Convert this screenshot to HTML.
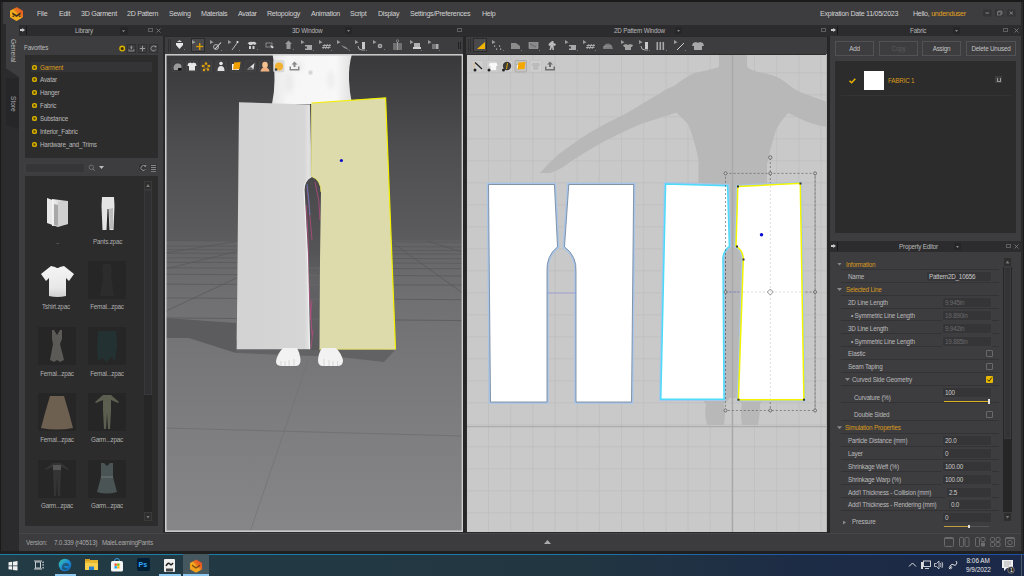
<!DOCTYPE html>
<html><head><meta charset="utf-8">
<style>
*{margin:0;padding:0;box-sizing:border-box}
html,body{width:1024px;height:576px;overflow:hidden;background:#1c1c1c;font-family:"Liberation Sans",sans-serif;color:#c4c4c4}
.a{position:absolute}
.t{position:absolute;white-space:nowrap;line-height:1}
.menu .t{font-size:7.1px;letter-spacing:-0.28px;color:#d2d2d2}
.s{font-size:6.3px;letter-spacing:-0.2px;margin-top:0.9px}
.org{color:#d99a1c}
.ibox{position:absolute;background:#2e2e30;border:1px solid #444}
</style></head><body>

<!-- outer frame -->
<div class="a" style="left:0;top:0;width:1024px;height:576px;background:#1a1a1a"></div>
<div class="a" style="left:1px;top:2px;width:1022px;height:551px;background:#2a2a2a"></div>

<!-- menu bar -->
<div class="a menu" style="left:3px;top:2px;width:1018px;height:23px;background:#3d3d40">
</div>
<div class="menu">
<span class="t" style="left:37px;top:11px">File</span>
<span class="t" style="left:59px;top:11px">Edit</span>
<span class="t" style="left:81px;top:11px">3D Garment</span>
<span class="t" style="left:127px;top:11px">2D Pattern</span>
<span class="t" style="left:169px;top:11px">Sewing</span>
<span class="t" style="left:201px;top:11px">Materials</span>
<span class="t" style="left:238px;top:11px">Avatar</span>
<span class="t" style="left:267px;top:11px">Retopology</span>
<span class="t" style="left:311px;top:11px">Animation</span>
<span class="t" style="left:350px;top:11px">Script</span>
<span class="t" style="left:378px;top:11px">Display</span>
<span class="t" style="left:410px;top:11px">Settings/Preferences</span>
<span class="t" style="left:482px;top:11px">Help</span>
<span class="t" style="left:820px;top:11px">Expiration Date 11/05/2023</span>
<span class="t" style="left:913px;top:11px">Hello, <span style="color:#e0a020">undenduser</span></span>
</div>
<!-- logo -->
<svg class="a" style="left:9px;top:6px" width="16" height="16" viewBox="0 0 16 16">
<defs><linearGradient id="lg1" x1="0.2" y1="0.8" x2="0.85" y2="0.15"><stop offset="0" stop-color="#f2a81c"/><stop offset="0.45" stop-color="#f2b01c"/><stop offset="0.6" stop-color="#ea7a20"/><stop offset="1" stop-color="#e45a22"/></linearGradient></defs>
<path d="M7.5,1.2 Q7.5,1 8,1.3 L13.6,4.4 Q14,4.6 14,5 L14,11 Q14,11.4 13.6,11.6 L8,14.8 Q7.5,15 7,14.8 L1.4,11.6 Q1,11.4 1,11 L1,5 Q1,4.6 1.4,4.4 Z" fill="url(#lg1)"/>
<path d="M3.3,6.3 L7.5,9 L11.7,6.3 L11.7,8.3 L7.5,11 L3.3,8.3 Z" fill="#3c2c1c"/>
<ellipse cx="4.3" cy="10.3" rx="1" ry="0.8" fill="#4a3418"/><ellipse cx="10.7" cy="10.3" rx="1" ry="0.8" fill="#4a3418"/>
</svg>
<!-- window controls -->
<svg class="a" style="left:980px;top:6px" width="40" height="14" viewBox="980 6 40 14">
<g fill="#343436"><rect x="983" y="9.5" width="8.5" height="7" rx="0.5"/><rect x="995" y="9.5" width="8.5" height="7" rx="0.5"/><rect x="1007" y="9.5" width="8.5" height="7" rx="0.5"/></g>
<line x1="985.5" y1="13" x2="989" y2="13" stroke="#a0a0a0" stroke-width="0.8"/>
<g fill="none" stroke="#9a9a9a" stroke-width="0.6"><rect x="997.5" y="12" width="3.5" height="3"/><path d="M998.5,12 L998.5,11 L1002,11 L1002,14 L1001,14"/></g>
<g stroke="#9a9a9a" stroke-width="0.7"><line x1="1009.5" y1="11.5" x2="1013" y2="14.5"/><line x1="1013" y1="11.5" x2="1009.5" y2="14.5"/></g>
</svg>
<!-- header band -->
<div class="a" style="left:19px;top:25px;width:1002px;height:11px;background:#2c2c2e"></div>


<!-- left tab strip -->
<div class="a" style="left:3px;top:24px;width:16px;height:529px;background:#2b2b2d"></div>
<div class="a" style="left:5.5px;top:24px;width:13.5px;height:53px;background:#3d3d40;clip-path:polygon(0 0,100% 0,100% 100%,0 83%)"></div>
<div class="a" style="left:5.5px;top:78px;width:13.5px;height:51px;background:#262628;clip-path:polygon(0 0,100% 0,100% 100%,0 92%)"></div>
<span class="t" style="left:16px;top:39px;font-size:6.6px;transform:rotate(90deg);transform-origin:0 0;color:#b8b8b8">General</span>
<span class="t" style="left:16px;top:96px;font-size:6.6px;transform:rotate(90deg);transform-origin:0 0;color:#a8a8b0">Store</span>

<!-- library panel -->
<div class="a" style="left:19px;top:36px;width:144px;height:497px;background:#3d3d40"></div>
<span class="t s" style="left:75px;top:27.5px;color:#b8b8b8">Library</span>
<div class="a" style="left:20px;top:28px;width:5px;height:4px;background:#c8c8c8;clip-path:polygon(0 25%,45% 25%,45% 0,100% 50%,45% 100%,45% 75%,0 75%)"></div>
<div class="a" style="left:26px;top:26px;width:1px;height:9px;background:#1a1a1a"></div>
<div class="a" style="left:119.5px;top:27px;width:8px;height:8px;background:#262628;border-radius:1px"></div>
<div class="a" style="left:122px;top:30.3px;width:3px;height:2px;background:#888;clip-path:polygon(0 0,100% 0,50% 100%)"></div>
<div class="a" style="left:148px;top:28px;width:5px;height:4px;border:1px solid #5e5e5e"></div>
<svg class="a" style="left:156px;top:28px" width="5" height="5"><g stroke="#8a8a8a" stroke-width="0.7"><line x1="0.5" y1="0.5" x2="4.5" y2="4.5"/><line x1="4.5" y1="0.5" x2="0.5" y2="4.5"/></g></svg>

<span class="t s" style="left:24px;top:44px;color:#bcbcbc">Favorites</span>
<svg class="a" style="left:115px;top:40px" width="45" height="16" viewBox="115 40 45 16">
<circle cx="122.2" cy="48.6" r="2.3" fill="#3a3000" stroke="#dcb400" stroke-width="1.4"/>
<g fill="#3d3d40" stroke="#2e2e30" stroke-width="0.8"><rect x="127.3" y="44.4" width="8.2" height="8.2"/><rect x="138.4" y="44.4" width="8.2" height="8.2"/><rect x="149.5" y="44.4" width="8.2" height="8.2"/></g>
<path d="M131.4,45.5 L133,47.5 L132,47.5 L132,49.5 L130.8,49.5 L130.8,47.5 L129.8,47.5 Z" fill="#8a8a8a"/><path d="M128.5,49 L128.5,51.5 L134.3,51.5 L134.3,49 L133.5,49 L133.5,50.5 L129.3,50.5 L129.3,49 Z" fill="#8a8a8a"/>
<rect x="142" y="45.8" width="1" height="5.5" fill="#9a9a9a"/><rect x="139.8" y="48" width="5.4" height="1" fill="#9a9a9a"/>
<path d="M155.5,47 A2.5,2.5 0 1 0 155.8,49.5" fill="none" stroke="#9a9a9a" stroke-width="0.9"/><polygon points="154.5,45.5 156.8,46 155.5,47.8" fill="#9a9a9a"/>
</svg>
<div class="a" style="left:25px;top:55px;width:133px;height:103px;background:#2c2c2c"></div>
<div class="a" style="left:31px;top:62px;width:121px;height:10px;background:#343436"></div>
<div class="a" style="left:32px;top:64.5px;width:5px;height:5px;border-radius:50%;background:#dcb400;box-shadow:inset 0 0 0 1.3px #dcb400,inset 0 0 0 3px #5a4a00"></div>
<span class="t s" style="left:40px;top:63.7px;color:#d99a1c">Garment</span>
<div class="a" style="left:32px;top:77.3px;width:5px;height:5px;border-radius:50%;background:#dcb400;box-shadow:inset 0 0 0 1.3px #dcb400,inset 0 0 0 3px #5a4a00"></div>
<span class="t s" style="left:40px;top:76.5px;color:#bababa">Avatar</span>
<div class="a" style="left:32px;top:90.2px;width:5px;height:5px;border-radius:50%;background:#dcb400;box-shadow:inset 0 0 0 1.3px #dcb400,inset 0 0 0 3px #5a4a00"></div>
<span class="t s" style="left:40px;top:89.4px;color:#bababa">Hanger</span>
<div class="a" style="left:32px;top:103.0px;width:5px;height:5px;border-radius:50%;background:#dcb400;box-shadow:inset 0 0 0 1.3px #dcb400,inset 0 0 0 3px #5a4a00"></div>
<span class="t s" style="left:40px;top:102.2px;color:#bababa">Fabric</span>
<div class="a" style="left:32px;top:115.8px;width:5px;height:5px;border-radius:50%;background:#dcb400;box-shadow:inset 0 0 0 1.3px #dcb400,inset 0 0 0 3px #5a4a00"></div>
<span class="t s" style="left:40px;top:115.0px;color:#bababa">Substance</span>
<div class="a" style="left:32px;top:128.7px;width:5px;height:5px;border-radius:50%;background:#dcb400;box-shadow:inset 0 0 0 1.3px #dcb400,inset 0 0 0 3px #5a4a00"></div>
<span class="t s" style="left:40px;top:127.9px;color:#bababa">Interior_Fabric</span>
<div class="a" style="left:32px;top:141.5px;width:5px;height:5px;border-radius:50%;background:#dcb400;box-shadow:inset 0 0 0 1.3px #dcb400,inset 0 0 0 3px #5a4a00"></div>
<span class="t s" style="left:40px;top:140.7px;color:#bababa">Hardware_and_Trims</span>

<!-- search row -->
<div class="a" style="left:25px;top:163px;width:60px;height:10px;background:#353537;border:1px solid #3f3f41"></div>
<svg class="a" style="left:88px;top:164px" width="8" height="8"><circle cx="3.3" cy="3.3" r="2.2" fill="none" stroke="#7a7a7a" stroke-width="0.8"/><line x1="4.9" y1="4.9" x2="7" y2="7" stroke="#7a7a7a" stroke-width="0.9"/></svg>
<div class="a" style="left:99px;top:166px;width:5px;height:3px;background:#bbb;clip-path:polygon(0 0,100% 0,50% 100%)"></div>
<div class="a" style="left:138px;top:163px;width:9px;height:9px;background:#343436;border:1px solid #3e3e40"></div>
<div class="a" style="left:149px;top:163px;width:9px;height:9px;background:#343436;border:1px solid #3e3e40"></div>

<svg class="a" style="left:138px;top:163px" width="21" height="10" viewBox="138 163 21 10">
<path d="M145.2,166.5 A2.4,2.4 0 1 0 145.5,169" fill="none" stroke="#9a9a9a" stroke-width="0.9"/><polygon points="144,165 146.5,165.3 145.3,167.3" fill="#9a9a9a"/>
<g fill="#888"><rect x="151" y="165" width="5" height="1"/><rect x="151" y="167" width="5" height="1"/><rect x="151" y="169" width="5" height="1"/><rect x="151" y="171" width="5" height="0.8"/></g>
</svg>
<div class="a" style="left:25px;top:176px;width:133px;height:350px;background:#2c2c2c"></div>
<!-- scrollbar -->
<div class="a" style="left:144px;top:181px;width:8px;height:340px;background:#262626"></div>
<div class="a" style="left:144px;top:181px;width:8px;height:9px;background:#2e2e2e;border:1px solid #3a3a3a"></div>
<div class="a" style="left:144px;top:190px;width:8px;height:205px;background:#303032;border:1px solid #38383a"></div>
<div class="a" style="left:144px;top:512px;width:8px;height:9px;background:#2e2e2e;border:1px solid #3a3a3a"></div>


<!-- thumbnails -->
<svg class="a" style="left:44px;top:196px" width="28" height="34" viewBox="0 0 28 34">
<defs><linearGradient id="fg" x1="0" x2="1"><stop offset="0" stop-color="#f4f4f4"/><stop offset="1" stop-color="#b8b8b8"/></linearGradient></defs>
<polygon points="3,2 14,6 14,31 3,27" fill="#e8e8e8"/>
<polygon points="8,3 24,5 24,28 8,30" fill="url(#fg)"/>
<polygon points="14,6 24,5 24,28 14,31" fill="#d0d0d0"/>
<polygon points="10,8 14,9 14,30 10,29" fill="#a8a8a8"/>
</svg>
<svg class="a" style="left:100px;top:196px" width="16" height="36" viewBox="0 0 16 36">
<path d="M2,1 L14,1 L14.5,10 L13.5,34 L9.5,34 L8.5,13 L7.5,13 L6.5,34 L2.5,34 L1.5,10 Z" fill="#e4e4e4"/>
<path d="M9,13 L13,12 L13,33 L10,33 Z" fill="#bcbcbc"/>
</svg>
<span class="t s" style="left:56px;top:238px;color:#9a9a9a">..</span>
<span class="t s" style="left:93px;top:238px;color:#acacac">Pants.zpac</span>
<svg class="a" style="left:40px;top:265px" width="35" height="32" viewBox="0 0 35 32">
<defs><linearGradient id="tsg" x1="0" y1="0" x2="0" y2="1"><stop offset="0" stop-color="#f4f4f4"/><stop offset="0.7" stop-color="#e8e8e8"/><stop offset="1" stop-color="#cfcfcf"/></linearGradient></defs>
<path d="M11,1 L15,2 Q17.5,4 20,2 L24,1 L34,9 L29,16 L26,13 L26,31 Q17.5,33 9,31 L9,13 L6,16 L1,9 Z" fill="url(#tsg)"/>
</svg>
<span class="t s" style="left:42px;top:303px;color:#acacac">Tshirt.zpac</span>
<div class="a" style="left:88px;top:261px;width:38px;height:38px;background:#262626"></div>
<span class="t s" style="left:90px;top:303.2px;width:34px;text-align:center;color:#b0b0b0">Femal...zpac</span>
<div class="a" style="left:38px;top:327px;width:38px;height:38px;background:#262626"></div>
<span class="t s" style="left:40px;top:369.7px;width:34px;text-align:center;color:#b0b0b0">Femal...zpac</span>
<div class="a" style="left:88px;top:327px;width:38px;height:38px;background:#262626"></div>
<span class="t s" style="left:90px;top:369.7px;width:34px;text-align:center;color:#b0b0b0">Femal...zpac</span>
<div class="a" style="left:38px;top:393px;width:38px;height:38px;background:#262626"></div>
<span class="t s" style="left:40px;top:435.7px;width:34px;text-align:center;color:#b0b0b0">Femal...zpac</span>
<div class="a" style="left:88px;top:393px;width:38px;height:38px;background:#262626"></div>
<span class="t s" style="left:90px;top:435.7px;width:34px;text-align:center;color:#b0b0b0">Garm...zpac</span>
<div class="a" style="left:38px;top:459.5px;width:38px;height:38px;background:#262626"></div>
<span class="t s" style="left:40px;top:501.7px;width:34px;text-align:center;color:#b0b0b0">Garm...zpac</span>
<div class="a" style="left:88px;top:459.5px;width:38px;height:38px;background:#262626"></div>
<span class="t s" style="left:90px;top:501.7px;width:34px;text-align:center;color:#b0b0b0">Garm...zpac</span>

<svg class="a" style="left:88px;top:261px" width="38" height="38" viewBox="0 0 38 38"><path d="M15,3 L23,3 L24,10 L23,16 L26,35 L12,35 L15,16 L14,10 Z" fill="#2c2c2c"/></svg>
<svg class="a" style="left:38px;top:327px" width="38" height="38" viewBox="0 0 38 38"><path d="M14,3 L16,3 L19,8 L22,3 L24,3 L24,12 L22,17 L26,33 L22,35 L19,33 L16,35 L12,33 L15,17 L14,12 Z" fill="#5c5a56"/></svg>
<svg class="a" style="left:88px;top:327px" width="38" height="38" viewBox="0 0 38 38"><path d="M10,4 L28,4 L29,18 L27,34 L23,30 L19,35 L14,31 L10,34 L9,18 Z" fill="#243132"/></svg>
<svg class="a" style="left:38px;top:393px" width="38" height="38" viewBox="0 0 38 38"><path d="M12,3 L26,3 L31,20 L35,35 Q19,38 3,35 L7,20 Z" fill="#6e6050"/></svg>
<svg class="a" style="left:88px;top:393px" width="38" height="38" viewBox="0 0 38 38"><path d="M15,2 L23,2 L31,9 L30,10 L23,7 L23,18 L22,36 L20,36 L19,20 L18,36 L16,36 L15,18 L15,7 L8,10 L7,9 Z" fill="#5c5e50"/></svg>
<svg class="a" style="left:38px;top:459.5px" width="38" height="38" viewBox="0 0 38 38"><path d="M15,3 L23,3 L31,9 L30,10 L23,7 L23,12 L22,36 L20,36 L19,18 L18,36 L16,36 L15,12 L15,7 L8,10 L7,9 Z" fill="#343434"/><rect x="15" y="5" width="8" height="5" fill="#555"/></svg>
<svg class="a" style="left:88px;top:459.5px" width="38" height="38" viewBox="0 0 38 38"><path d="M13,3 L16,3 L19,6 L22,3 L25,3 L25,17 L29,32 Q19,35 9,32 L13,17 Z" fill="#4a5454"/><rect x="13" y="16" width="12" height="2" fill="#5c6666"/></svg>

<!-- status bar -->
<div class="a" style="left:19px;top:533px;width:1002px;height:1px;background:#464648"></div>
<div class="a" style="left:19px;top:534px;width:1002px;height:17px;background:#3c3c3e"></div>
<span class="t s" style="left:26px;top:539px;color:#a8a8a8">Version:</span>
<span class="t s" style="left:54px;top:539px;color:#a8a8a8">7.0.339 (r40513)</span>
<span class="t s" style="left:102px;top:539px;color:#a8a8a8">MaleLearningPants</span>
<div class="a" style="left:544px;top:540px;width:7px;height:4px;background:#aaa;clip-path:polygon(50% 0,100% 100%,0 100%)"></div>


<!-- 3D window -->
<span class="t s" style="left:292px;top:27.5px;color:#b8b8b8">3D Window</span>
<div class="a" style="left:345px;top:27px;width:7px;height:7px;background:#262628"></div>
<div class="a" style="left:347px;top:30px;width:3px;height:2px;background:#888;clip-path:polygon(0 0,100% 0,50% 100%)"></div>
<div class="a" style="left:457px;top:28px;width:5px;height:4px;border:1px solid #5e5e5e"></div>
<div class="a" style="left:165px;top:37px;width:298px;height:17px;background:#3d3d40"></div>
<div class="a" style="left:168px;top:39px;width:1px;height:13px;background:#2e2e30"></div>
<div class="a" style="left:170px;top:39px;width:1px;height:13px;background:#2e2e30"></div>
<div class="a" style="left:191px;top:38px;width:14px;height:14px;background:#4a4a4c;border:1px solid #2a2a2a"></div>
<svg class="a" style="left:165px;top:54px" width="298" height="478" viewBox="165 54 298 478">
<defs>
<linearGradient id="sky" x1="0" y1="0" x2="0" y2="1">
<stop offset="0" stop-color="#38383a"/><stop offset="0.5" stop-color="#4e4e50"/><stop offset="1" stop-color="#5c5c5e"/>
</linearGradient>
<linearGradient id="floor" x1="0" y1="0" x2="0" y2="1">
<stop offset="0" stop-color="#646466"/><stop offset="0.2" stop-color="#707072"/><stop offset="0.65" stop-color="#7e7e80"/><stop offset="1" stop-color="#868688"/>
</linearGradient>
<linearGradient id="lp" x1="0" y1="0" x2="1" y2="0">
<stop offset="0" stop-color="#d2d2d2"/><stop offset="0.9" stop-color="#d6d6d6"/><stop offset="0.96" stop-color="#e2e2e2"/><stop offset="1" stop-color="#cccccc"/>
</linearGradient>
<linearGradient id="tor" x1="0" y1="0" x2="1" y2="0">
<stop offset="0" stop-color="#e6e6e6"/><stop offset="0.2" stop-color="#f6f6f6"/><stop offset="0.8" stop-color="#f8f8f8"/><stop offset="1" stop-color="#e0e0e0"/>
</linearGradient>
</defs>
<rect x="165" y="54" width="298" height="187" fill="url(#sky)"/>
<rect x="165" y="240.5" width="298" height="292" fill="url(#floor)"/>
<g stroke="#58585a" stroke-width="0.7" fill="none">
<line x1="165" y1="240.5" x2="463" y2="242.3"/>
<line x1="165" y1="246" x2="463" y2="246.9"/>
<line x1="165" y1="249.6" x2="463" y2="250.5"/>
<line x1="165" y1="253.2" x2="463" y2="254.1"/>
<line x1="165" y1="257.8" x2="463" y2="258.7"/>
<line x1="165" y1="262.3" x2="463" y2="263.3"/>
<line x1="165" y1="267.8" x2="463" y2="268.7"/>
<line x1="165" y1="274.2" x2="463" y2="276"/>
<line x1="165" y1="284.2" x2="463" y2="285.1"/>
<line x1="165" y1="297.9" x2="463" y2="299.7"/>
<line x1="165" y1="317.9" x2="463" y2="320.6"/>
<line x1="165" y1="428" x2="463" y2="436" stroke="#6c6c6e"/>
<line x1="165" y1="253" x2="237" y2="241.4"/>
<line x1="165" y1="269" x2="237" y2="251.4"/>
<line x1="165" y1="311.5" x2="237" y2="277.8"/>
<line x1="391.8" y1="242.3" x2="463" y2="293.3"/>
<line x1="427.3" y1="241" x2="463" y2="252.3"/>
<line x1="309" y1="358" x2="250" y2="532" stroke="#727274"/>
</g>
<polygon points="165,318 236,323 236,353 189,338 165,338" fill="#5c5c5e"/>
<polygon points="236,340 395,350 384,362 340,357 236,353" fill="#626264"/>
<path d="M272.5,54 L352,54 Q348.5,66 349,80 Q349.5,92 352,104 L272,104 Q274.5,92 274.5,80 Q274.5,64 272.5,54 Z" fill="url(#tor)"/>
<defs><filter id="bl" x="-50%" y="-50%" width="200%" height="200%"><feGaussianBlur stdDeviation="2.5"/></filter><filter id="bl1"><feGaussianBlur stdDeviation="0.8"/></filter></defs>
<g filter="url(#bl)" fill="#dcdcdc" opacity="0.45"><ellipse cx="289" cy="82" rx="4" ry="12"/><ellipse cx="298" cy="66" rx="5" ry="5"/><ellipse cx="331" cy="80" rx="3" ry="10"/></g>
<ellipse cx="310.5" cy="72.5" rx="1.5" ry="2" fill="#b8b8b8" filter="url(#bl1)"/>
<defs><linearGradient id="gapg" x1="0" y1="0" x2="0" y2="1"><stop offset="0" stop-color="#48484a"/><stop offset="0.45" stop-color="#555557"/><stop offset="0.6" stop-color="#626264"/><stop offset="1" stop-color="#5a5a5c"/></linearGradient></defs>
<rect x="302" y="175" width="20" height="175" fill="url(#gapg)"/>
<g stroke="#6c6c6e" stroke-width="0.6"><line x1="302" y1="268" x2="322" y2="268"/><line x1="302" y1="275" x2="322" y2="276"/><line x1="302" y1="285" x2="322" y2="285"/><line x1="302" y1="299" x2="322" y2="299"/><line x1="302" y1="319" x2="322" y2="319"/></g>
<path d="M307,186 Q310,215 312,240 M306,205 Q309,240 308,270 L312,335 M315,182 Q320,200 320,220" stroke="#c84888" stroke-width="0.7" fill="none"/>
<path d="M307,184 Q309,200 310,215" stroke="#5a88d0" stroke-width="0.7" fill="none"/>
<path d="M312,300 L310,320 M313,330 L311,348" stroke="#c84888" stroke-width="0.6" fill="none"/>
<path d="M239,102.3 L310,104.5 L311.7,176.5 Q304,180 304,190 L307.4,255 L309.6,349.2 L236.7,349.2 Z" fill="url(#lp)"/>
<path d="M311.7,176.5 Q304,180 304,190 L307.4,255 L309.6,349.2" stroke="#f0f0f0" stroke-width="1.2" fill="none"/>
<path d="M311.6,103 L385.6,97.8 L395.5,349.2 L319.5,349.2 L320,260 L321,192 Q321,180 311.7,176.5 Z" fill="#dddbab"/>
<polyline points="311.6,103 385.6,97.8 395.5,349.2" stroke="#f2f000" stroke-width="1.2" fill="none"/>
<line x1="319.3" y1="349.2" x2="395.5" y2="349.2" stroke="#e8e860" stroke-width="0.8"/>
<line x1="311.6" y1="103" x2="311.7" y2="176" stroke="#f2f080" stroke-width="0.8"/><path d="M311.7,176.5 Q321,180 321,192" stroke="#f2f060" stroke-width="0.8" fill="none"/>
<circle cx="341.4" cy="160.5" r="1.6" fill="#0a0ac8"/>
<g fill="#f2f2f2">
<path d="M283,348 L297,348 Q300,353 300.5,359 Q301,365.5 296,366 L281,366 Q276,365.5 276,361.5 Q277,354 283,348 Z"/>
<path d="M322,348 L336,348 Q341,353 343,360 Q343.5,365.5 338,366 L323,366 Q318,366 318,360 Q318.5,353 322,348 Z"/>
</g>
<g stroke="#c4c4c4" stroke-width="0.6">
<line x1="281" y1="361" x2="281" y2="366"/><line x1="285" y1="361" x2="285" y2="366"/><line x1="289" y1="360" x2="289" y2="366"/><line x1="294" y1="359" x2="294" y2="366"/>
<line x1="324" y1="359" x2="324" y2="366"/><line x1="329" y1="360" x2="329" y2="366"/><line x1="333" y1="361" x2="333" y2="366"/><line x1="337.5" y1="361" x2="337.5" y2="366"/>
</g>
<rect x="165.8" y="54.8" width="296.6" height="476.4" fill="none" stroke="#cfcfcf" stroke-width="1.5"/>
</svg>
<div class="a" style="left:463px;top:36px;width:3px;height:497px;background:#262626"></div>


<!-- 2D window -->
<span class="t s" style="left:614px;top:27.5px;color:#b8b8b8">2D Pattern Window</span>
<div class="a" style="left:675px;top:27px;width:7px;height:7px;background:#262628"></div>
<div class="a" style="left:677px;top:30px;width:3px;height:2px;background:#888;clip-path:polygon(0 0,100% 0,50% 100%)"></div>
<div class="a" style="left:821px;top:28px;width:5px;height:4px;border:1px solid #5e5e5e"></div>
<div class="a" style="left:466px;top:37px;width:361px;height:17px;background:#3d3d40"></div>
<div class="a" style="left:468px;top:39px;width:1px;height:13px;background:#2e2e30"></div>
<div class="a" style="left:470px;top:39px;width:1px;height:13px;background:#2e2e30"></div>
<div class="a" style="left:473px;top:38px;width:14px;height:14px;background:#4a4a4c;border:1px solid #2a2a2a"></div>
<svg class="a" style="left:476px;top:41px" width="10" height="9"><polygon points="1,8 9,1 9,8" fill="#f0b400"/></svg>
<svg class="a" style="left:466px;top:54px" width="361" height="478" viewBox="466 54 361 478">
<rect x="466" y="54" width="361" height="478" fill="#c9c9c9"/>
<g stroke="#bfbfbf" stroke-width="0.8">
<line x1="488.5" y1="54" x2="488.5" y2="532"/>
<line x1="510.7" y1="54" x2="510.7" y2="532"/>
<line x1="532.8" y1="54" x2="532.8" y2="532"/>
<line x1="555.0" y1="54" x2="555.0" y2="532"/>
<line x1="577.2" y1="54" x2="577.2" y2="532"/>
<line x1="599.3" y1="54" x2="599.3" y2="532"/>
<line x1="621.5" y1="54" x2="621.5" y2="532"/>
<line x1="643.7" y1="54" x2="643.7" y2="532"/>
<line x1="665.9" y1="54" x2="665.9" y2="532"/>
<line x1="688.0" y1="54" x2="688.0" y2="532"/>
<line x1="710.2" y1="54" x2="710.2" y2="532"/>
<line x1="732.4" y1="54" x2="732.4" y2="532"/>
<line x1="754.5" y1="54" x2="754.5" y2="532"/>
<line x1="776.7" y1="54" x2="776.7" y2="532"/>
<line x1="798.9" y1="54" x2="798.9" y2="532"/>
<line x1="821.0" y1="54" x2="821.0" y2="532"/>
<line x1="466" y1="72.8" x2="827" y2="72.8"/>
<line x1="466" y1="94.8" x2="827" y2="94.8"/>
<line x1="466" y1="116.8" x2="827" y2="116.8"/>
<line x1="466" y1="138.8" x2="827" y2="138.8"/>
<line x1="466" y1="160.8" x2="827" y2="160.8"/>
<line x1="466" y1="182.8" x2="827" y2="182.8"/>
<line x1="466" y1="204.8" x2="827" y2="204.8"/>
<line x1="466" y1="226.8" x2="827" y2="226.8"/>
<line x1="466" y1="248.8" x2="827" y2="248.8"/>
<line x1="466" y1="270.8" x2="827" y2="270.8"/>
<line x1="466" y1="292.8" x2="827" y2="292.8"/>
<line x1="466" y1="314.8" x2="827" y2="314.8"/>
<line x1="466" y1="336.8" x2="827" y2="336.8"/>
<line x1="466" y1="358.8" x2="827" y2="358.8"/>
<line x1="466" y1="380.8" x2="827" y2="380.8"/>
<line x1="466" y1="402.8" x2="827" y2="402.8"/>
<line x1="466" y1="424.8" x2="827" y2="424.8"/>
<line x1="466" y1="446.8" x2="827" y2="446.8"/>
<line x1="466" y1="468.8" x2="827" y2="468.8"/>
<line x1="466" y1="490.8" x2="827" y2="490.8"/>
<line x1="466" y1="512.8" x2="827" y2="512.8"/>
</g>
<!-- avatar silhouette -->
<path fill="#b8b8b8" d="M719,54 L747,54 L747,67 Q752,71 764,73 Q778,76 785,82 Q792,88 800,92 L827,102 L827,127 Q815,125 805,121 L788,113 Q780,122 776,130 Q770,148 767,165 L767,330 L762,398 Q762,402 760,404 Q760,412 758,425 L742,425 Q740,412 742,404 L736,398 L730,398 L724,404 Q726,412 724,425 L707,425 Q704,412 706,404 Q703,402 703,398 L699,330 L698.5,180 L698.5,159.5 Q694,138 688,124 L676.5,112.6 Q660,118 641,124 Q620,133 603,142 Q585,152 570,162 Q560,170 550,173 L540,173 Q548,163 559,154 Q575,142 589,133 Q608,122 627,113 Q645,102 662,92 Q668,88 674,86 Q684,78 694,73 Q710,70 719,67 Z"/>
<line x1="732.5" y1="54" x2="732.5" y2="532" stroke="#a8a8a8" stroke-width="1.4"/>
<line x1="466" y1="426.7" x2="827" y2="426.7" stroke="#a4a4a4" stroke-width="1"/>
<!-- bounding box -->
<g fill="none" stroke="#555" stroke-width="0.6" stroke-dasharray="2,2">
<rect x="725.5" y="173.4" width="89.6" height="237.1"/>
<line x1="770.3" y1="158" x2="770.3" y2="410.5"/>
<line x1="725.5" y1="292" x2="815.1" y2="292"/>
</g>
<g fill="#cfcfcf" stroke="#555" stroke-width="0.6">
<circle cx="770.3" cy="157.5" r="1.6"/>
<circle cx="725.5" cy="173.4" r="1.4"/><circle cx="770.3" cy="173.4" r="1.4"/><circle cx="815.1" cy="173.4" r="1.4"/>
<circle cx="725.5" cy="292" r="1.4"/><circle cx="815.1" cy="292" r="1.4"/>
<circle cx="725.5" cy="410.5" r="1.4"/><circle cx="770.3" cy="410.5" r="1.4"/><circle cx="815.1" cy="410.5" r="1.4"/>
</g>
<!-- pattern pieces -->
<g fill="none" stroke="#a8c6ea" stroke-width="3.6" stroke-linejoin="miter">
<path d="M488.5,184.5 L554.4,184.5 L557.5,246.8 Q546,256 547,272 L547,402 L490.5,402 Z"/><path d="M568.8,184.5 L633.7,184.5 L631.5,402 L576,402 L576,272 Q577,256 564.5,246.8 Z"/><path d="M665.6,183.9 L727.6,185.7 L729.4,246.4 Q722,252 723,262 L724,399.2 L660.8,399.2 Z"/><path d="M737.8,186.5 L800.3,183.3 L803.9,399.7 L738.4,399.7 L743.3,259.4 Q743,250 736,246.4 Z"/>
</g>
<g fill="#ffffff">
<path d="M488.5,184.5 L554.4,184.5 L557.5,246.8 Q546,256 547,272 L547,402 L490.5,402 Z"/><path d="M568.8,184.5 L633.7,184.5 L631.5,402 L576,402 L576,272 Q577,256 564.5,246.8 Z"/><path d="M665.6,183.9 L727.6,185.7 L729.4,246.4 Q722,252 723,262 L724,399.2 L660.8,399.2 Z"/><path d="M737.8,186.5 L800.3,183.3 L803.9,399.7 L738.4,399.7 L743.3,259.4 Q743,250 736,246.4 Z"/>
</g>
<g fill="none" stroke="#6e7e90" stroke-width="0.8">
<path d="M488.5,184.5 L554.4,184.5 L557.5,246.8 Q546,256 547,272 L547,402 L490.5,402 Z"/><path d="M568.8,184.5 L633.7,184.5 L631.5,402 L576,402 L576,272 Q577,256 564.5,246.8 Z"/>
</g>
<line x1="547" y1="293" x2="576" y2="293" stroke="#8a8ae0" stroke-width="0.6"/><line x1="727" y1="292" x2="741" y2="292" stroke="#9a9ae0" stroke-width="0.6"/>
<path d="M665.6,183.9 L727.6,185.7 L729.4,246.4 Q722,252 723,262 L724,399.2 L660.8,399.2 Z" fill="none" stroke="#4cdcf8" stroke-width="1.5"/>
<path d="M737.8,186.5 L800.3,183.3 L803.9,399.7 L738.4,399.7 L743.3,259.4 Q743,250 736,246.4 Z" fill="none" stroke="#f4f400" stroke-width="1.5"/>
<g fill="#333">
<rect x="737" y="185.5" width="2" height="2"/><rect x="799.5" y="182.5" width="2" height="2"/><rect x="803" y="398.7" width="2" height="2"/><rect x="737.5" y="398.7" width="2" height="2"/>
<rect x="736" y="245.5" width="2" height="2"/><rect x="742.5" y="258.5" width="2" height="2"/>
</g>
<g fill="none" stroke-width="0.6" stroke-dasharray="2,2">
<line x1="770.3" y1="186" x2="770.3" y2="399" stroke="#c8c8c8"/>
<line x1="739" y1="292" x2="803" y2="292" stroke="#c8c8c8"/>
<line x1="725.5" y1="185" x2="725.5" y2="400" stroke="#555"/>
<line x1="815.1" y1="173.4" x2="815.1" y2="410.5" stroke="#555"/>
</g>
<g fill="#cfcfcf" stroke="#555" stroke-width="0.6">
<circle cx="770.3" cy="157.5" r="1.6"/>
<circle cx="725.5" cy="173.4" r="1.4"/><circle cx="770.3" cy="173.4" r="1.4"/><circle cx="815.1" cy="173.4" r="1.4"/>
<circle cx="725.5" cy="292" r="1.4"/><circle cx="815.1" cy="292" r="1.4"/>
<circle cx="725.5" cy="410.5" r="1.4"/><circle cx="770.3" cy="410.5" r="1.4"/><circle cx="815.1" cy="410.5" r="1.4"/>
</g>
<path d="M767.3,292 L770.3,289 L773.3,292 L770.3,295 Z" fill="none" stroke="#555" stroke-width="0.6"/>
<circle cx="761.5" cy="234.7" r="1.7" fill="#0a0ad0"/>
<line x1="466.5" y1="54" x2="466.5" y2="532" stroke="#2e2e2e" stroke-width="1"/><line x1="466" y1="54.5" x2="827" y2="54.5" stroke="#2e2e2e" stroke-width="1"/><line x1="826.5" y1="54" x2="826.5" y2="532" stroke="#b4b4b4" stroke-width="1"/>
</svg>
<div class="a" style="left:827px;top:36px;width:3px;height:497px;background:#262626"></div>


<svg class="a" style="left:0;top:0" width="1024" height="60" viewBox="0 0 1024 60"><polygon points="176,43 183,43 183,45 179.5,49 176,45" fill="#e8e8e8"/><polygon points="177,42 182,42 179.5,40" fill="#cfcfcf"/><rect x="184" y="49" width="1" height="1" fill="#777"/><polygon points="192,40 195.5,42.2 192,44" fill="#9a9a9a"/><rect x="199" y="43" width="1.4" height="7" fill="#d89a00"/><rect x="196.2" y="45.8" width="7" height="1.4" fill="#d89a00"/><polygon points="210,40 213.5,42.2 210,44" fill="#9a9a9a"/><circle cx="216" cy="47" r="2.5" fill="none" stroke="#bbb" stroke-width="0.9"/><line x1="215" y1="49" x2="221" y2="42.5" stroke="#d8d8d8" stroke-width="1.1"/><rect x="221" y="50" width="1" height="1" fill="#777"/><polygon points="228,40 231.5,42.2 228,44" fill="#9a9a9a"/><line x1="232" y1="50" x2="237.5" y2="42.5" stroke="#c8c8c8" stroke-width="0.9"/><circle cx="237.5" cy="42" r="1.1" fill="#e8e8e8"/><rect x="239" y="50" width="1" height="1" fill="#777"/><path d="M247.5,43.5 Q249,41 252,42 Q255,41 256.5,43.5 L255,45 L252.5,44 L252.5,45 L249,45 L249,44 Z" fill="#d0d0d0"/><rect x="249" y="46" width="2" height="3" fill="#d0d0d0"/><rect x="252.5" y="46" width="2" height="3" fill="#d0d0d0"/><rect x="257" y="49" width="1" height="1" fill="#777"/><rect x="266" y="43" width="6" height="4" fill="none" stroke="#999" stroke-width="0.8"/><path d="M270,45 L274,47 L272,48.5 Z" fill="#e0e0e0"/><path d="M288.5,40.5 L292,44 L290.5,44 L290.5,49 L286.5,49 L286.5,44 L285,44 Z" fill="#9a9a9a"/><rect x="293" y="49" width="1" height="1" fill="#777"/><polygon points="301,40 304.5,42.2 301,44" fill="#9a9a9a"/><path d="M305,45 L312,45 L312,50 L305,50 L305,48.5 L307,48.5 L307,46.5 L305,46.5 Z" fill="#a8a8a8"/><rect x="313" y="50" width="1" height="1" fill="#777"/><polygon points="319,40 322.5,42.2 319,44" fill="#9a9a9a"/><g stroke="#b0b0b0" stroke-width="0.9"><line x1="323" y1="49" x2="325" y2="44"/><line x1="325.5" y1="49" x2="327.5" y2="44"/><line x1="328" y1="49" x2="330" y2="44"/><line x1="322.5" y1="45.5" x2="331" y2="45.5"/><line x1="322" y1="47.5" x2="330.5" y2="47.5"/></g><rect x="331" y="50" width="1" height="1" fill="#777"/><polygon points="337,40 340.5,42.2 337,44" fill="#9a9a9a"/><path d="M341,45 L346,47 L349,50 L344,48 Z" fill="#888"/><rect x="349" y="50" width="1" height="1" fill="#777"/><polygon points="355,40 358.5,42.2 355,44" fill="#9a9a9a"/><rect x="362" y="42" width="3" height="7" fill="#c8c8c8"/><path d="M358,46 Q358,50 362,50 L365,50" fill="none" stroke="#aaa" stroke-width="1"/><rect x="366" y="50" width="1" height="1" fill="#777"/><polygon points="373,40 376.5,42.2 373,44" fill="#9a9a9a"/><circle cx="380" cy="46" r="2.3" fill="#aaa"/><circle cx="380" cy="46" r="1" fill="#666"/><rect x="384" y="49" width="1" height="1" fill="#777"/><rect x="393" y="43" width="9" height="7" fill="#707070"/><circle cx="397.5" cy="41" r="1.2" fill="none" stroke="#999" stroke-width="0.7"/><line x1="397.5" y1="42" x2="397.5" y2="50" stroke="#aaa" stroke-width="0.8"/><polygon points="410,40 413.5,42.2 410,44" fill="#9a9a9a"/><rect x="414" y="43" width="6" height="4" fill="#b0b0b0"/><rect x="413" y="47" width="8" height="2" fill="#d0d0d0"/><rect x="421" y="50" width="1" height="1" fill="#777"/><polygon points="428,40 431.5,42.2 428,44" fill="#9a9a9a"/><rect x="432" y="44" width="3" height="5" fill="#777"/><rect x="435.5" y="44" width="3" height="5" fill="#aaa"/><rect x="439" y="50" width="1" height="1" fill="#777"/><rect x="458" y="42" width="1" height="7" fill="#222"/><rect x="460" y="42" width="1" height="7" fill="#222"/><polygon points="492,40 495.5,42.2 492,44" fill="#9a9a9a"/><g fill="#bbb"><rect x="494" y="45.5" width="1.2" height="1.2"/><rect x="499" y="45.5" width="1.2" height="1.2"/><rect x="496" y="48.5" width="1.2" height="1.2"/><rect x="500" y="48.5" width="1.2" height="1.2"/></g><rect x="503" y="50" width="1" height="1" fill="#777"/><path d="M511,43 L516,43 L520,46 L520,49 L511,49 Z" fill="#8c8c8c"/><rect x="521" y="50" width="1" height="1" fill="#777"/><rect x="529" y="42.5" width="9" height="6" fill="#888" stroke="#aaa" stroke-width="0.6"/><path d="M530,44 L536,47" stroke="#555" stroke-width="0.6"/><rect x="539" y="50" width="1" height="1" fill="#777"/><path d="M552,41 L553.5,41 L553.5,43 L556,44 L555,46 L553.5,45.5 L554,50 L552.5,50 L552,47 L551,50 L549.5,50 L550.5,45.5 L549,46 L548.5,44 Z" fill="#bbb"/><polygon points="565,40 568.5,42.2 565,44" fill="#9a9a9a"/><path d="M569,45 L576,45 L576,50 L569,50 L569,48.5 L571,48.5 L571,46.5 L569,46.5 Z" fill="#a8a8a8"/><rect x="577" y="50" width="1" height="1" fill="#777"/><polygon points="583,40 586.5,42.2 583,44" fill="#9a9a9a"/><g stroke="#b0b0b0" stroke-width="0.9"><line x1="587" y1="49" x2="589" y2="44"/><line x1="589.5" y1="49" x2="591.5" y2="44"/><line x1="592" y1="49" x2="594" y2="44"/><line x1="586.5" y1="45.5" x2="595" y2="45.5"/><line x1="586" y1="47.5" x2="594.5" y2="47.5"/></g><rect x="595" y="50" width="1" height="1" fill="#777"/><path d="M603,49 Q603,44 608,43.5 Q612,44 613,49 Z" fill="#7a7a7a"/><line x1="603" y1="47" x2="612" y2="46" stroke="#999" stroke-width="0.6"/><polygon points="621,40 624.5,42.2 621,44" fill="#9a9a9a"/><path d="M623,45 L626,44 L628,45 L630,44 L633,45 L632,47 L631,47 L631,50 L625,50 L625,47 L624,47 Z" fill="#a0a0a0"/><polygon points="639,40 642.5,42.2 639,44" fill="#9a9a9a"/><rect x="645" y="42" width="3" height="7" fill="#c8c8c8"/><path d="M641,46 Q641,50 645,50 L648,50" fill="none" stroke="#aaa" stroke-width="1"/><rect x="649" y="50" width="1" height="1" fill="#777"/><g fill="#a8a8a8"><rect x="656.5" y="42" width="1.6" height="8"/><rect x="659.5" y="42" width="1.6" height="8"/><rect x="662.5" y="42" width="1.6" height="8"/></g><rect x="666" y="50" width="1" height="1" fill="#777"/><polygon points="674,40 677.5,42.2 674,44" fill="#9a9a9a"/><line x1="677" y1="50" x2="684" y2="43" stroke="#d0d0d0" stroke-width="1"/><rect x="685" y="50" width="1" height="1" fill="#777"/><path d="M693,43 L696,42 Q698,43.5 700,42 L703,43 L704,46 L702,46 L702,50 L694,50 L694,46 L692,46 Z" fill="#a8a8a8"/></svg>
<svg class="a" style="left:0;top:0" width="1024" height="80" viewBox="0 0 1024 80"><rect x="172" y="60.8" width="10.5" height="11" rx="1" fill="#3c3c3e" stroke="#4c4c4e" stroke-width="0.6"/><rect x="186.5" y="60.8" width="10.5" height="11" rx="1" fill="#3c3c3e" stroke="#4c4c4e" stroke-width="0.6"/><rect x="201" y="60.8" width="10.5" height="11" rx="1" fill="#3c3c3e" stroke="#4c4c4e" stroke-width="0.6"/><rect x="216" y="60.8" width="10.5" height="11" rx="1" fill="#3c3c3e" stroke="#4c4c4e" stroke-width="0.6"/><rect x="230.5" y="60.8" width="10.5" height="11" rx="1" fill="#3c3c3e" stroke="#4c4c4e" stroke-width="0.6"/><rect x="245" y="60.8" width="10.5" height="11" rx="1" fill="#3c3c3e" stroke="#4c4c4e" stroke-width="0.6"/><rect x="259.5" y="60.8" width="10.5" height="11" rx="1" fill="#3c3c3e" stroke="#4c4c4e" stroke-width="0.6"/><rect x="273.5" y="60.8" width="10.5" height="11" rx="1" fill="#dcdcdc" stroke="#c8c8c8" stroke-width="0.5"/>
<path d="M173.5,68 Q174,63 178,63.5 Q181,63 181.5,66 L181,70 L174,70 Z" fill="#9a9a9a"/><rect x="178" y="68" width="3.5" height="2.5" fill="#111"/>
<path d="M188,63.5 L190.5,62.5 Q192,64 193.5,62.5 L196,63.5 L196.5,66 L195,66 L195,70.5 L189,70.5 L189,66 L187.5,66 Z" fill="#e8e8e8"/>
<g fill="#e0a010"><circle cx="206" cy="63.5" r="1.3"/><circle cx="209" cy="66" r="1.3"/><circle cx="208" cy="69.5" r="1.3"/><circle cx="204" cy="70" r="1.3"/><circle cx="203" cy="66" r="1.3"/></g><circle cx="206" cy="66.5" r="2" fill="none" stroke="#c89010" stroke-width="0.7"/>
<circle cx="221" cy="63.5" r="1.8" fill="#e8e8e8"/><path d="M217.5,71 Q217.5,66 221,66 Q224.5,66 224.5,71 Z" fill="#e0e0e0"/>
<rect x="232" y="64" width="7" height="6" fill="#f0f0f0"/><path d="M234,62.5 L240.5,62 L239.5,69 L233,69.5 Z" fill="#f0a000"/>
<path d="M247,69.5 L254.5,63 L253.5,69.5 Z" fill="#e0e0e0"/><path d="M247,69.5 L251,67 L253.5,69.5 Z" fill="#555"/>
<ellipse cx="265" cy="65" rx="2.8" ry="3.2" fill="#f4c090"/><path d="M260.5,71.5 Q261,67.5 265,67.5 Q269,67.5 269.5,71.5 Z" fill="#f0b080"/>
<circle cx="279" cy="66.5" r="4" fill="#f0b030"/><circle cx="276" cy="69.5" r="1.3" fill="#444"/>
<path d="M294.5,61.5 L297.5,64.5 L295.5,64.5 L295.5,67 L293.5,67 L293.5,64.5 L291.5,64.5 Z" fill="#888"/><path d="M289.5,66.5 L289.5,70.5 L299.5,70.5 L299.5,66.5 L298,66.5 L298,69 L291,69 L291,66.5 Z" fill="#888"/>
<rect x="472" y="60.5" width="11.5" height="11.5" rx="1" fill="#cfcfcf" stroke="#c0c0c0" stroke-width="0.6"/><rect x="486.5" y="60.5" width="11.5" height="11.5" rx="1" fill="#cfcfcf" stroke="#c0c0c0" stroke-width="0.6"/><rect x="501" y="60.5" width="11.5" height="11.5" rx="1" fill="#cfcfcf" stroke="#c0c0c0" stroke-width="0.6"/><rect x="515" y="60.5" width="11.5" height="11.5" rx="1" fill="#c4c4c4" stroke="#9a9a9a" stroke-width="0.6"/><rect x="530" y="60.5" width="11.5" height="11.5" rx="1" fill="#cfcfcf" stroke="#c0c0c0" stroke-width="0.6"/>
<line x1="475" y1="62.5" x2="482" y2="69" stroke="#222" stroke-width="1.3"/><line x1="474" y1="63" x2="474" y2="68" stroke="#e0b070" stroke-width="0.8"/><circle cx="475" cy="70" r="1.5" fill="#222"/>
<path d="M489.5,63.5 L492,62.5 Q493,64 494.5,62.5 L497,63.5 L497.5,66 L496,66 L496,70 L490.5,70 L490.5,66 L489,66 Z" fill="#f8f8f8"/><circle cx="489" cy="70" r="1.5" fill="#222"/>
<circle cx="507" cy="66" r="4.2" fill="#3a3a3a"/><line x1="507.5" y1="63" x2="506.5" y2="69" stroke="#e0a000" stroke-width="1"/><circle cx="503.5" cy="70" r="1.5" fill="#222"/>
<rect x="516.5" y="64.5" width="5" height="5" fill="#f4f4f4" stroke="#999" stroke-width="0.4"/><path d="M518.5,62.5 L525.5,62 L524.5,69 L517.5,69.5 Z" fill="#f4a800"/>
<path d="M532,63.5 L534.5,62.5 Q535.5,64 537,62.5 L539.5,63.5 L540,66 L538.5,66 L538.5,70 L533,70 L533,66 L531.5,66 Z" fill="#bcbcbc"/>
<path d="M550,61.5 L553,64.5 L551,64.5 L551,67 L549,67 L549,64.5 L547,64.5 Z" fill="#707070"/><path d="M545,66.5 L545,70.5 L555,70.5 L555,66.5 L553.5,66.5 L553.5,69 L546.5,69 L546.5,66.5 Z" fill="#707070"/>
</svg>
<!-- Fabric panel -->
<div class="a" style="left:830px;top:36px;width:191px;height:205px;background:#3d3d40"></div>
<div class="a" style="left:831px;top:28px;width:5px;height:4px;background:#c8c8c8;clip-path:polygon(0 25%,45% 25%,45% 0,100% 50%,45% 100%,45% 75%,0 75%)"></div>
<div class="a" style="left:837px;top:26px;width:1px;height:9px;background:#1a1a1a"></div>
<span class="t s" style="left:910px;top:27.5px;color:#b8b8b8">Fabric</span>
<div class="a" style="left:953px;top:27px;width:7px;height:7px;background:#262628"></div>
<div class="a" style="left:955px;top:30px;width:3px;height:2px;background:#888;clip-path:polygon(0 0,100% 0,50% 100%)"></div>
<div class="a" style="left:1003px;top:28px;width:5px;height:4px;border:1px solid #5e5e5e"></div>
<svg class="a" style="left:1014px;top:28px" width="5" height="5"><g stroke="#8a8a8a" stroke-width="0.7"><line x1="0.5" y1="0.5" x2="4.5" y2="4.5"/><line x1="4.5" y1="0.5" x2="0.5" y2="4.5"/></g></svg>
<div class="a" style="left:835px;top:41px;width:39px;height:15px;background:#3d3d40;border:1px solid #525254"></div>
<span class="t s" style="left:835px;top:45.5px;width:39px;text-align:center;color:#c4c4c4">Add</span>
<div class="a" style="left:879px;top:41px;width:39px;height:15px;background:#3d3d40;border:1px solid #525254"></div>
<span class="t s" style="left:879px;top:45.5px;width:39px;text-align:center;color:#5a5a5a">Copy</span>
<div class="a" style="left:922px;top:41px;width:39px;height:15px;background:#3d3d40;border:1px solid #525254"></div>
<span class="t s" style="left:922px;top:45.5px;width:39px;text-align:center;color:#c4c4c4">Assign</span>
<div class="a" style="left:966px;top:41px;width:50px;height:15px;background:#3d3d40;border:1px solid #525254"></div>
<span class="t s" style="left:966px;top:45.5px;width:50px;text-align:center;color:#c4c4c4">Delete Unused</span>

<div class="a" style="left:835px;top:61px;width:181px;height:172px;background:#2c2c2c"></div>
<svg class="a" style="left:848px;top:77px" width="9" height="8"><polyline points="1.5,3.8 3.6,5.8 7.3,1.8" stroke="#e8b400" stroke-width="1.5" fill="none"/></svg>
<div class="a" style="left:864px;top:71px;width:20px;height:19px;background:#ffffff"></div>
<span class="t s" style="left:888px;top:77.5px;color:#d99a1c">FABRIC 1</span>
<div class="a" style="left:995px;top:76px;width:7px;height:7px;background:#3d3d40"></div>
<div class="a" style="left:996.5px;top:77.5px;width:4px;height:4px;border:1px solid #999;border-top:none"></div>
<div class="a" style="left:841px;top:95px;width:170px;height:1px;background:#343436"></div>

<!-- Property Editor -->
<div class="a" style="left:830px;top:241px;width:191px;height:11px;background:#2c2c2e"></div>
<div class="a" style="left:830px;top:252px;width:191px;height:281px;background:#3d3d40"></div>
<div class="a" style="left:831px;top:244px;width:5px;height:4px;background:#c8c8c8;clip-path:polygon(0 25%,45% 25%,45% 0,100% 50%,45% 100%,45% 75%,0 75%)"></div>
<div class="a" style="left:837px;top:242px;width:1px;height:9px;background:#1a1a1a"></div>
<span class="t s" style="left:899px;top:243.5px;color:#b8b8b8">Property Editor</span>
<div class="a" style="left:954px;top:243px;width:7px;height:7px;background:#262628"></div>
<div class="a" style="left:956px;top:246px;width:3px;height:2px;background:#888;clip-path:polygon(0 0,100% 0,50% 100%)"></div>
<div class="a" style="left:1006px;top:244px;width:5px;height:4px;border:1px solid #5e5e5e"></div>
<svg class="a" style="left:1014px;top:244px" width="5" height="5"><g stroke="#8a8a8a" stroke-width="0.7"><line x1="0.5" y1="0.5" x2="4.5" y2="4.5"/><line x1="4.5" y1="0.5" x2="0.5" y2="4.5"/></g></svg>
<!-- scrollbar -->
<div class="a" style="left:1003px;top:257px;width:9px;height:265px;background:#262626"></div>
<div class="a" style="left:1003px;top:257px;width:9px;height:10px;background:#2e2e2e;border:1px solid #3c3c3c"></div>
<div class="a" style="left:1004px;top:267px;width:7px;height:172px;background:#333335;border:1px solid #3a3a3a"></div>
<div class="a" style="left:1003px;top:512px;width:9px;height:10px;background:#2e2e2e;border:1px solid #3c3c3c"></div>
<div class="a" style="left:837px;top:262.5px;width:5px;height:3px;background:#888;clip-path:polygon(0 0,100% 0,50% 100%)"></div>
<span class="t s" style="left:846px;top:260.7px;color:#d99a1c">Information</span>
<div class="a" style="left:841px;top:269.0px;width:158px;height:1px;background:#333335"></div>
<span class="t s" style="left:848px;top:273.4px;color:#bababa">Name</span>
<div class="a" style="left:841px;top:281.7px;width:158px;height:1px;background:#333335"></div>
<div class="a" style="left:926px;top:271.2px;width:66px;height:11px;background:#353537;border:1px solid #3e3e40"></div>
<span class="t s" style="left:929px;top:273.4px;color:#c8c8c8">Pattern2D_10656</span>
<div class="a" style="left:837px;top:288.1px;width:5px;height:3px;background:#888;clip-path:polygon(0 0,100% 0,50% 100%)"></div>
<span class="t s" style="left:846px;top:286.3px;color:#d99a1c">Selected Line</span>
<div class="a" style="left:841px;top:294.6px;width:158px;height:1px;background:#333335"></div>
<span class="t s" style="left:848px;top:299.2px;color:#bababa">2D Line Length</span>
<div class="a" style="left:841px;top:307.5px;width:158px;height:1px;background:#333335"></div>
<div class="a" style="left:942px;top:297.0px;width:50px;height:11px;background:#353537;border:1px solid #3e3e40"></div>
<span class="t s" style="left:945px;top:299.2px;color:#6a6a6a">9.945in</span>
<span class="t s" style="left:851px;top:312.09999999999997px;color:#bababa">• Symmetric Line Length</span>
<div class="a" style="left:841px;top:320.4px;width:158px;height:1px;background:#333335"></div>
<div class="a" style="left:942px;top:309.9px;width:50px;height:11px;background:#353537;border:1px solid #3e3e40"></div>
<span class="t s" style="left:945px;top:312.09999999999997px;color:#6a6a6a">19.890in</span>
<span class="t s" style="left:848px;top:325.0px;color:#bababa">3D Line Length</span>
<div class="a" style="left:841px;top:333.3px;width:158px;height:1px;background:#333335"></div>
<div class="a" style="left:942px;top:322.8px;width:50px;height:11px;background:#353537;border:1px solid #3e3e40"></div>
<span class="t s" style="left:945px;top:325.0px;color:#6a6a6a">9.942in</span>
<span class="t s" style="left:851px;top:337.9px;color:#bababa">• Symmetric Line Length</span>
<div class="a" style="left:841px;top:346.2px;width:158px;height:1px;background:#333335"></div>
<div class="a" style="left:942px;top:335.7px;width:50px;height:11px;background:#353537;border:1px solid #3e3e40"></div>
<span class="t s" style="left:945px;top:337.9px;color:#6a6a6a">19.885in</span>
<span class="t s" style="left:848px;top:350.59999999999997px;color:#bababa">Elastic</span>
<div class="a" style="left:841px;top:358.9px;width:158px;height:1px;background:#333335"></div>
<div class="a" style="left:986px;top:350.4px;width:7px;height:7px;border:1px solid #6a6a6a;border-radius:1px"></div>
<span class="t s" style="left:848px;top:363.5px;color:#bababa">Seam Taping</span>
<div class="a" style="left:841px;top:371.8px;width:158px;height:1px;background:#333335"></div>
<div class="a" style="left:986px;top:363.3px;width:7px;height:7px;border:1px solid #6a6a6a;border-radius:1px"></div>
<span class="t s" style="left:852px;top:376.3px;color:#bababa">Curved Side Geometry</span>
<div class="a" style="left:841px;top:384.6px;width:158px;height:1px;background:#333335"></div>
<div class="a" style="left:845px;top:378.1px;width:5px;height:3px;background:#888;clip-path:polygon(0 0,100% 0,50% 100%)"></div>
<div class="a" style="left:986px;top:376.1px;width:7px;height:7px;background:#e8b800;border-radius:1px"></div>
<svg class="a" style="left:986px;top:376.1px" width="7" height="7"><polyline points="1.3,3.5 3,5.3 5.8,1.5" stroke="#3a3000" stroke-width="1" fill="none"/></svg>
<span class="t s" style="left:854px;top:393.7px;color:#bababa">Curvature (%)</span>
<div class="a" style="left:841px;top:402.0px;width:158px;height:1px;background:#333335"></div>
<div class="a" style="left:942px;top:387px;width:50px;height:11px;background:#353537;border:1px solid #3e3e40"></div>
<span class="t s" style="left:945px;top:389px;color:#c8c8c8">100</span>
<div class="a" style="left:944px;top:400.5px;width:45px;height:1.5px;background:#d8b020"></div>
<div class="a" style="left:988px;top:398.5px;width:2px;height:5px;background:#e0e0e0"></div>
<span class="t s" style="left:854px;top:411.4px;color:#bababa">Double Sided</span>
<div class="a" style="left:841px;top:419.7px;width:158px;height:1px;background:#333335"></div>
<div class="a" style="left:986px;top:411.2px;width:7px;height:7px;border:1px solid #6a6a6a;border-radius:1px"></div>
<div class="a" style="left:837px;top:426.3px;width:5px;height:3px;background:#888;clip-path:polygon(0 0,100% 0,50% 100%)"></div>
<span class="t s" style="left:845px;top:424.5px;color:#d99a1c">Simulation Properties</span>
<div class="a" style="left:841px;top:432.8px;width:158px;height:1px;background:#333335"></div>
<span class="t s" style="left:848px;top:437.3px;color:#bababa">Particle Distance (mm)</span>
<div class="a" style="left:841px;top:445.6px;width:158px;height:1px;background:#333335"></div>
<div class="a" style="left:942px;top:435.1px;width:50px;height:11px;background:#353537;border:1px solid #3e3e40"></div>
<span class="t s" style="left:945px;top:437.3px;color:#c8c8c8">20.0</span>
<span class="t s" style="left:848px;top:450.2px;color:#bababa">Layer</span>
<div class="a" style="left:841px;top:458.5px;width:158px;height:1px;background:#333335"></div>
<div class="a" style="left:942px;top:448.0px;width:50px;height:11px;background:#353537;border:1px solid #3e3e40"></div>
<span class="t s" style="left:945px;top:450.2px;color:#c8c8c8">0</span>
<span class="t s" style="left:848px;top:463.0px;color:#bababa">Shrinkage Weft (%)</span>
<div class="a" style="left:841px;top:471.3px;width:158px;height:1px;background:#333335"></div>
<div class="a" style="left:942px;top:460.8px;width:50px;height:11px;background:#353537;border:1px solid #3e3e40"></div>
<span class="t s" style="left:945px;top:463.0px;color:#c8c8c8">100.00</span>
<span class="t s" style="left:848px;top:475.8px;color:#bababa">Shrinkage Warp (%)</span>
<div class="a" style="left:841px;top:484.1px;width:158px;height:1px;background:#333335"></div>
<div class="a" style="left:942px;top:473.6px;width:50px;height:11px;background:#353537;border:1px solid #3e3e40"></div>
<span class="t s" style="left:945px;top:475.8px;color:#c8c8c8">100.00</span>
<span class="t s" style="left:848px;top:488.7px;color:#bababa">Add'l Thickness - Collision (mm)</span>
<div class="a" style="left:841px;top:497.0px;width:158px;height:1px;background:#333335"></div>
<div class="a" style="left:946px;top:486.5px;width:46px;height:11px;background:#353537;border:1px solid #3e3e40"></div>
<span class="t s" style="left:949px;top:488.7px;color:#c8c8c8">2.5</span>
<span class="t s" style="left:848px;top:501.5px;color:#bababa">Add'l Thickness - Rendering (mm)</span>
<div class="a" style="left:841px;top:509.8px;width:158px;height:1px;background:#333335"></div>
<div class="a" style="left:948px;top:499.3px;width:44px;height:11px;background:#353537;border:1px solid #3e3e40"></div>
<span class="t s" style="left:951px;top:501.5px;color:#c8c8c8">0.0</span>

<div class="a" style="left:843px;top:520.5px;width:3px;height:4px;background:#888;clip-path:polygon(0 0,100% 50%,0 100%)"></div>
<span class="t s" style="left:852px;top:518.5px;color:#bababa">Pressure</span>
<div class="a" style="left:942px;top:512px;width:50px;height:11px;background:#353537;border:1px solid #3e3e40"></div>
<span class="t s" style="left:945px;top:514.5px;color:#c8c8c8">0</span>
<div class="a" style="left:944px;top:525.5px;width:45px;height:1px;background:#555"></div>
<div class="a" style="left:944px;top:525.5px;width:25px;height:1px;background:#c0a040"></div>
<div class="a" style="left:968px;top:524.5px;width:2px;height:3px;background:#ddd"></div>
<!-- layout icons bottom right -->
<svg class="a" style="left:940px;top:534px" width="84" height="16" viewBox="940 534 84 16">
<g fill="none" stroke="#6e6e6e" stroke-width="0.9">
<rect x="944.5" y="537.5" width="9" height="9" rx="1"/><line x1="944.5" y1="538.5" x2="953.5" y2="538.5"/>
<rect x="959.5" y="537.5" width="4" height="9" rx="1"/><rect x="965" y="537.5" width="4" height="9" rx="1"/>
<rect x="975.5" y="537.5" width="4" height="9" rx="1"/><rect x="981" y="537.5" width="4" height="4" rx="1"/>
<rect x="990.5" y="537.5" width="4" height="4" rx="1"/><rect x="996" y="537.5" width="4" height="4" rx="1"/><rect x="990.5" y="542.5" width="4" height="4" rx="1"/><rect x="996" y="542.5" width="4" height="4" rx="1"/>
<rect x="1005.5" y="537.5" width="9" height="9" rx="1"/><line x1="1005.5" y1="538.5" x2="1014.5" y2="538.5"/><circle cx="1010" cy="542.5" r="2.2"/>
</g>
<rect x="981" y="542.5" width="4" height="4" rx="1" fill="#6e6e6e"/>
</svg>
<div class="a" style="left:146px;top:184px;width:4px;height:3px;background:#777;clip-path:polygon(50% 0,100% 100%,0 100%)"></div>
<div class="a" style="left:146px;top:515.5px;width:4px;height:3px;background:#777;clip-path:polygon(0 0,100% 0,50% 100%)"></div>
<div class="a" style="left:1005.5px;top:260.5px;width:4px;height:3px;background:#777;clip-path:polygon(50% 0,100% 100%,0 100%)"></div>
<div class="a" style="left:1005.5px;top:515.5px;width:4px;height:3px;background:#777;clip-path:polygon(0 0,100% 0,50% 100%)"></div>
<!-- taskbar -->
<div class="a" style="left:0;top:551px;width:1024px;height:2.5px;background:#202020"></div>
<div class="a" style="left:0;top:553.5px;width:1024px;height:1.5px;background:linear-gradient(90deg,#1a82aa 0%,#1a78a8 55%,#1f58a8 80%,#1f50a8 100%)"></div>
<div class="a" style="left:0;top:555px;width:1024px;height:21px;background:linear-gradient(90deg,#223b44 0%,#223641 55%,#1d2c45 78%,#1b2848 100%)"></div>
<!-- windows logo -->
<svg class="a" style="left:8px;top:560.5px" width="10" height="10" viewBox="0 0 10 10"><g fill="#f0f0f0"><polygon points="0.5,1.3 4.2,0.8 4.2,4.4 0.5,4.4"/><polygon points="5,0.7 9.5,0 9.5,4.4 5,4.4"/><polygon points="0.5,5.2 4.2,5.2 4.2,8.8 0.5,8.3"/><polygon points="5,5.2 9.5,5.2 9.5,9.6 5,8.9"/></g></svg>
<!-- task view -->
<svg class="a" style="left:34px;top:560px" width="10" height="10" viewBox="0 0 10 10"><g fill="none" stroke="#ddd" stroke-width="0.9"><rect x="1.5" y="2" width="5" height="6"/><line x1="0" y1="1" x2="8" y2="1"/><line x1="0" y1="9" x2="8" y2="9"/></g><g fill="#ddd"><rect x="8.5" y="1.5" width="1.2" height="1.5"/><rect x="8.5" y="4.2" width="1.2" height="1.5"/><rect x="8.5" y="7" width="1.2" height="1.5"/></g></svg>
<!-- edge -->
<svg class="a" style="left:58px;top:558px" width="14" height="14" viewBox="0 0 14 14">
<defs><linearGradient id="eg" x1="0" y1="0" x2="1" y2="1"><stop offset="0" stop-color="#38c8a0"/><stop offset="0.5" stop-color="#1f8fd8"/><stop offset="1" stop-color="#0c5aa8"/></linearGradient></defs>
<circle cx="7" cy="7" r="6.3" fill="url(#eg)"/><path d="M4,9 Q4,5 8,5 Q11,5 11,8 L6,8 Q6.5,10.5 10,10.5 Q8,12.5 5.5,12 Q3,11 4,9 Z" fill="#1f3540" opacity="0.55"/></svg>
<div class="a" style="left:55px;top:574px;width:21px;height:2px;background:#8cc8f0"></div>
<!-- explorer -->
<svg class="a" style="left:85px;top:559px" width="13" height="12" viewBox="0 0 13 12"><rect x="0" y="1" width="13" height="10" fill="#e8b830"/><rect x="0" y="0" width="5" height="2" fill="#d8a020"/><rect x="0" y="4" width="13" height="7" fill="#f8d050"/><rect x="4" y="7.5" width="5" height="3.5" fill="#2a80d0"/></svg>
<!-- store -->
<svg class="a" style="left:110px;top:558px" width="14" height="14" viewBox="0 0 14 14"><path d="M4.5,3 Q4.5,0.5 7,0.5 Q9.5,0.5 9.5,3" fill="none" stroke="#3aa0e0" stroke-width="1"/><rect x="1" y="3" width="12" height="10.5" rx="1.5" fill="#f4f4f4"/><rect x="4.5" y="5.5" width="2.3" height="2.3" fill="#f25022"/><rect x="7.2" y="5.5" width="2.3" height="2.3" fill="#7fba00"/><rect x="4.5" y="8.2" width="2.3" height="2.3" fill="#00a4ef"/><rect x="7.2" y="8.2" width="2.3" height="2.3" fill="#ffb900"/></svg>
<!-- ps -->
<div class="a" style="left:137px;top:558px;width:13px;height:13px;background:#001d34;border-radius:2px"></div>
<span class="t" style="left:138.5px;top:561px;font-size:7px;font-weight:bold;color:#31a8ff">Ps</span>
<!-- marvelous -->
<div class="a" style="left:164px;top:559px;width:11px;height:13px;background:#f0f0f0;border-radius:1px"></div>
<svg class="a" style="left:164px;top:559px" width="11" height="13" viewBox="0 0 11 13"><path d="M2,7 Q4,3 6,5 Q7,7 9,4" stroke="#222" stroke-width="1.5" fill="none"/><rect x="2" y="9.5" width="7" height="3" fill="#444"/></svg>
<div class="a" style="left:159px;top:574px;width:22px;height:2px;background:#8cc8f0"></div>
<!-- clo -->
<div class="a" style="left:183px;top:554px;width:26px;height:22px;background:#45575f"></div>
<svg class="a" style="left:189px;top:557.5px" width="15" height="16" viewBox="0 0 16 16">
<defs><linearGradient id="lg2" x1="0.2" y1="0.8" x2="0.85" y2="0.15"><stop offset="0" stop-color="#f2a01c"/><stop offset="0.45" stop-color="#f2a81c"/><stop offset="0.6" stop-color="#ea7020"/><stop offset="1" stop-color="#e45022"/></linearGradient></defs>
<path d="M7.5,1.2 Q7.5,1 8,1.3 L13.6,4.4 Q14,4.6 14,5 L14,11 Q14,11.4 13.6,11.6 L8,14.8 Q7.5,15 7,14.8 L1.4,11.6 Q1,11.4 1,11 L1,5 Q1,4.6 1.4,4.4 Z" fill="url(#lg2)"/>
<path d="M3.3,6.3 L7.5,9 L11.7,6.3 L11.7,8.3 L7.5,11 L3.3,8.3 Z" fill="#6a3a18" opacity="0.8"/>
</svg>
<div class="a" style="left:183px;top:574px;width:26px;height:2px;background:#8cc8f0"></div>
<!-- tray -->
<svg class="a" style="left:908px;top:562px" width="9" height="5"><polyline points="1,4.5 4.5,1 8,4.5" stroke="#ddd" stroke-width="1" fill="none"/></svg>
<svg class="a" style="left:921px;top:560px" width="10" height="10" viewBox="0 0 10 10"><g fill="none" stroke="#ddd" stroke-width="0.9"><rect x="2.5" y="1" width="7" height="5.5"/><line x1="4" y1="8.5" x2="8" y2="8.5"/></g><rect x="0" y="2" width="2" height="7" fill="#ddd"/></svg>
<svg class="a" style="left:934px;top:560px" width="10" height="10" viewBox="0 0 10 10"><path d="M0.5,3.5 L2.5,3.5 L5,1 L5,9 L2.5,6.5 L0.5,6.5 Z" fill="none" stroke="#ddd" stroke-width="0.8"/><path d="M6.5,3 Q7.5,5 6.5,7 M8,2 Q9.5,5 8,8" fill="none" stroke="#ddd" stroke-width="0.8"/></svg>
<svg class="a" style="left:948px;top:560px" width="10" height="10" viewBox="0 0 10 10"><path d="M1,9 L3,7 M2,6 Q4,3 6,5 Q7,7 9,3 L8,1" fill="none" stroke="#ddd" stroke-width="1"/><circle cx="2.5" cy="7.5" r="1.3" fill="none" stroke="#ddd" stroke-width="0.8"/></svg>
<span class="t" style="left:966.5px;top:557.5px;font-size:6.4px;color:#e8e8e8">8:06 AM</span>
<span class="t" style="left:966px;top:566.5px;font-size:6.4px;color:#e8e8e8">9/9/2022</span>
<svg class="a" style="left:1001px;top:559px" width="14" height="15" viewBox="0 0 14 15"><path d="M1,1 L12,1 L12,9 L6,9 L3,12 L3,9 L1,9 Z" fill="#f0f0f0"/><g stroke="#888" stroke-width="0.6"><line x1="3" y1="3" x2="10" y2="3"/><line x1="3" y1="5" x2="10" y2="5"/><line x1="3" y1="7" x2="8" y2="7"/></g><circle cx="10" cy="11" r="3.3" fill="#2a2a2a" stroke="#aaa" stroke-width="0.6"/><text x="9" y="13" font-size="5" fill="#fff" font-family="Liberation Sans">1</text></svg>
<div class="a" style="left:1021px;top:554px;width:1px;height:22px;background:#4a5a6a"></div>

</body></html>
